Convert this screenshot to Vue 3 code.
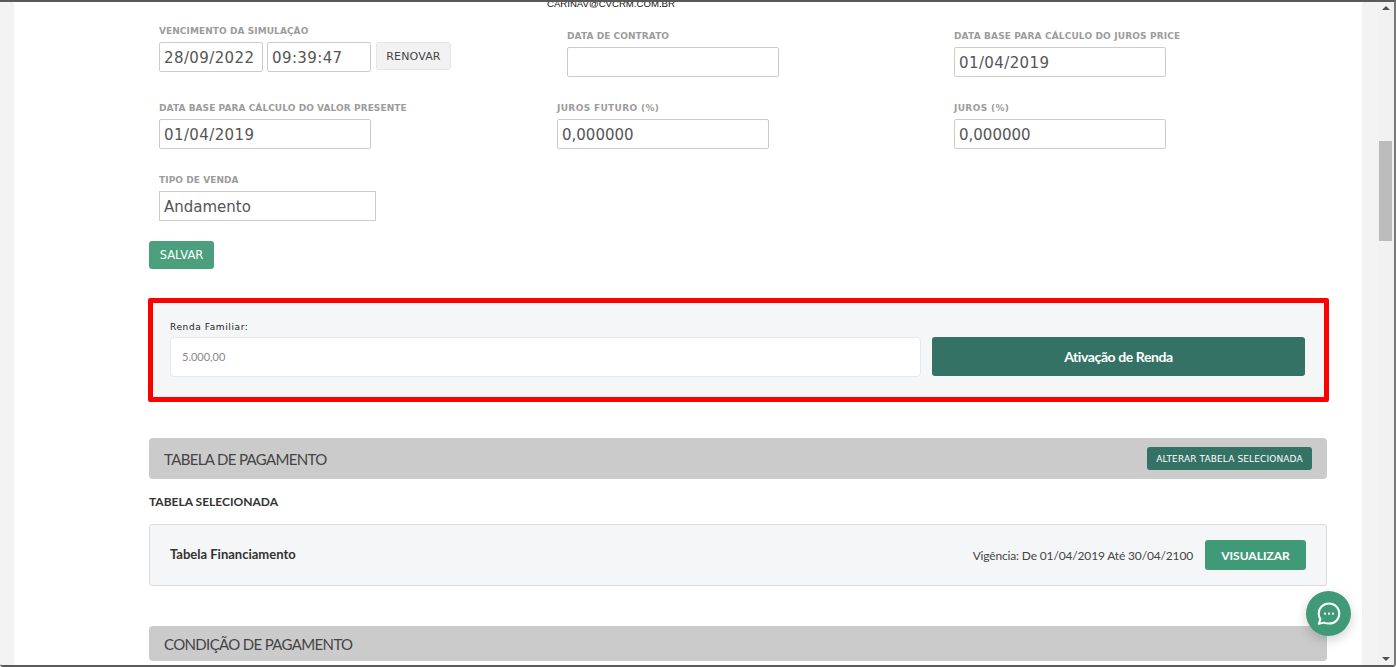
<script setup>
const rowTwo = [
  { label: 'DATA BASE PARA CÁLCULO DO VALOR PRESENTE', value: '01/04/2019', date: true, wide: false },
  { label: 'JUROS FUTURO (%)', value: '0,000000', date: false, wide: true },
  { label: 'JUROS (%)', value: '0,000000', date: false, wide: true },
]
</script>

<template>
  <div class="frame">
    <div class="gutter"></div>
    <main class="page">
      <div class="email">CARINAV@CVCRM.COM.BR</div>

      <section class="form-grid">
        <div class="cell cell-first">
          <div class="lbl">VENCIMENTO DA SIMULAÇÃO</div>
          <div class="inline">
            <div class="inp inp-short inp-date">28/09/2022</div>
            <div class="inp inp-short inp-date">09:39:47</div>
            <button class="renew">RENOVAR</button>
          </div>
        </div>
        <div class="cell cell-indent">
          <div class="lbl">DATA DE CONTRATO</div>
          <div class="inp"></div>
        </div>
        <div class="cell">
          <div class="lbl lbl-price">DATA BASE PARA CÁLCULO DO JUROS PRICE</div>
          <div class="inp inp-date">01/04/2019</div>
        </div>

        <div v-for="f in rowTwo" :key="f.label" class="cell">
          <div class="lbl" :class="{ 'lbl-wide': f.wide }">{{ f.label }}</div>
          <div class="inp" :class="{ 'inp-date': f.date }">{{ f.value }}</div>
        </div>

        <div class="cell">
          <div class="lbl">TIPO DE VENDA</div>
          <div class="inp inp-select">Andamento</div>
        </div>
      </section>

      <button class="save">SALVAR</button>

      <section class="income">
        <div class="income-field">
          <div class="income-label">Renda Familiar:</div>
          <div class="income-input">5.000,00</div>
        </div>
        <button class="income-btn">Ativação de Renda</button>
      </section>

      <header class="bar bar-first">
        <span>TABELA DE PAGAMENTO</span>
        <button class="change">ALTERAR TABELA SELECIONADA</button>
      </header>

      <h3 class="selected">TABELA SELECIONADA</h3>

      <div class="card">
        <strong class="card-title">Tabela Financiamento</strong>
        <div class="card-right">
          <span class="valid">Vigência: De 01/04/2019 Até 30/04/2100</span>
          <button class="view">VISUALIZAR</button>
        </div>
      </div>

      <header class="bar bar-second"><span>CONDIÇÃO DE PAGAMENTO</span></header>
    </main>
    <div class="gutter gutter-right"></div>
    <div class="scrollbar">
      <span class="arrow arrow-up"></span>
      <div class="thumb"></div>
      <span class="arrow arrow-down"></span>
    </div>

    <button class="chat" aria-label="Chat">
      <svg width="28" height="28" viewBox="0 0 28 28" fill="none">
        <path d="M14 3.6c-5.9 0-10.3 4.4-10.3 10 0 2 .6 3.9 1.7 5.5l-1.600 4.800 5.200-1.300c1.500.7 3.200 1 5 1 5.900 0 10.300-4.400 10.300-10S19.900 3.600 14 3.600Z" stroke="#fff" stroke-width="2" stroke-linejoin="round"/>
        <circle cx="10" cy="13.700" r="1.100" fill="#fff"/>
        <circle cx="14" cy="13.700" r="1.100" fill="#fff"/>
        <circle cx="18" cy="13.700" r="1.100" fill="#fff"/>
      </svg>
    </button>
  </div>
</template>

<style>
html, body { margin: 0; height: 100%; overflow: hidden; background: #fff; }
</style>

<style scoped>
* { box-sizing: border-box; }
.frame {
  position: relative;
  display: flex;
  width: 1396px;
  height: 667px;
  overflow: hidden;
  border-top: 2px solid #5a5a5a;
  border-bottom: 2px solid #5a5a5a;
  border-right: 2px solid #777;
  border-radius: 0 0 3px 3px;
  background: #fff;
  font-family: "Lato", sans-serif;
  color: #333;
}
.gutter { flex: 0 0 14px; background: #f3f3f3; }
.gutter-right { flex-basis: 15px; }
.page { flex: 0 0 1348px; padding-left: 135px; padding-right: 35px; overflow: hidden; }
.email {
  height: 9px;
  margin: -5px 0 0 398px;
  font: 9.6px/14px "Liberation Sans", sans-serif;
  color: #111;
  white-space: nowrap;
}
.form-grid {
  display: grid;
  grid-template-columns: 398px 397px 1fr;
  grid-auto-rows: 72px;
  margin-top: 24px;
  padding-left: 10px;
}
.cell { display: flex; flex-direction: column; align-items: flex-start; }
.cell-first { margin-top: -5px; }
.cell-indent { padding-left: 10px; }
.lbl {
  height: 12px;
  margin-bottom: 5px;
  font: bold 9px/12px "DejaVu Sans", sans-serif;
  letter-spacing: .07px;
  color: #9c9c9c;
  white-space: nowrap;
}
.lbl-price { letter-spacing: .15px; }
.lbl-wide { letter-spacing: .35px; }
.inline { display: flex; align-items: flex-start; gap: 4px; }
.inp {
  width: 212px;
  height: 30px;
  padding: 0 4px;
  background: #fff;
  border: 1px solid #ccc;
  border-radius: 2px;
  font: 15px/30px "DejaVu Sans", sans-serif;
  color: #555;
  white-space: nowrap;
}
.inp-date { letter-spacing: .4px; }
.inp-short { width: 104px; }
.inp-select { width: 217px; border-radius: 0; }
.renew {
  width: 75px;
  height: 28px;
  margin-left: 1px;
  padding: 0;
  background: #f2f2f2;
  border: 1px solid #e6e6e6;
  border-radius: 3px;
  font: 11px "DejaVu Sans", sans-serif;
  letter-spacing: .15px;
  color: #444;
}
.save {
  display: block;
  width: 65px;
  height: 28px;
  margin-top: -5px;
  padding: 0;
  background: #4b9f7c;
  border: 0;
  border-radius: 3px;
  font: 11.5px "DejaVu Sans", sans-serif;
  color: #fff;
}
.income {
  display: flex;
  align-items: flex-start;
  gap: 11px;
  width: 1181px;
  height: 104px;
  margin: 29px 0 0 -1px;
  padding: 19px 19px 0 17px;
  background: #f5f6f8;
  border: 5px solid #f00;
  border-radius: 2px;
}
.income-field { flex: 1; }
.income-label {
  height: 10px;
  margin-bottom: 5px;
  font: 9px/10px "DejaVu Sans", sans-serif;
  letter-spacing: .6px;
  color: #222;
}
.income-input {
  height: 40px;
  padding-left: 11px;
  background: #fff;
  border: 1px solid #e6e8ec;
  border-radius: 4px;
  font: 11px/38px "Lato", sans-serif;
  color: #888;
}
.income-btn {
  flex: 0 0 373px;
  height: 39px;
  margin-top: 15px;
  background: #347265;
  border: 0;
  border-radius: 3px;
  font: bold 14px "Lato", sans-serif;
  letter-spacing: -.4px;
  color: #fff;
}
.bar {
  display: flex;
  align-items: center;
  justify-content: space-between;
  padding: 0 15px;
  background: #cbcbcb;
  border-radius: 4px;
  font-size: 15px;
  letter-spacing: -.65px;
  color: #444;
}
.bar-first { height: 41px; margin-top: 36px; }
.bar-second { height: 35px; margin-top: 40px; }
.change {
  width: 165px;
  height: 23px;
  padding: 0;
  background: #347265;
  border: 0;
  border-radius: 3px;
  font: 9px "DejaVu Sans", sans-serif;
  letter-spacing: .12px;
  color: #fff;
  white-space: nowrap;
}
.selected {
  height: 45px;
  margin: 0;
  padding-top: 16px;
  font: bold 12px/14px "Lato", sans-serif;
  color: #333;
}
.card {
  display: flex;
  align-items: center;
  justify-content: space-between;
  height: 62px;
  padding: 0 20px;
  background: #f5f6f8;
  border: 1px solid #dcdcdc;
  border-radius: 3px;
}
.card-title { font: bold 13px "Lato", sans-serif; color: #333; margin-bottom: 2px; }
.card-right { display: flex; align-items: center; gap: 12px; }
.valid { font-size: 12px; letter-spacing: -.16px; color: #444; }
.view {
  width: 101px;
  height: 30px;
  padding: 0;
  background: #419a77;
  border: 0;
  border-radius: 3px;
  font: bold 12px "Lato", sans-serif;
  color: #fff;
}
.scrollbar {
  position: relative;
  flex: 1;
  background: #f1f1f1;
}
.thumb {
  position: absolute;
  left: 2px;
  top: 139px;
  width: 13px;
  height: 100px;
  background: #bcbcbc;
}
.arrow { position: absolute; left: 5px; width: 0; height: 0; border: 4px solid transparent; }
.arrow-up { top: 4px; border-bottom: 4px solid #505050; border-top: 0; }
.arrow-down { bottom: 4px; border-top: 4px solid #505050; border-bottom: 0; }
.chat {
  position: absolute;
  left: 1306px;
  top: 589px;
  display: flex;
  align-items: center;
  justify-content: center;
  width: 45px;
  height: 45px;
  padding: 0;
  background: #419a77;
  border: 0;
  border-radius: 50%;
  box-shadow: 0 4px 12px rgba(0, 0, 0, .18);
}
</style>
